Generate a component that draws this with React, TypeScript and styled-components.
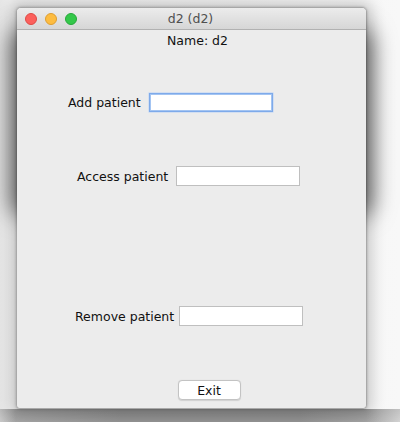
import React from "react";
import styled, { createGlobalStyle } from "styled-components";

const Global = createGlobalStyle`
  html, body { margin: 0; padding: 0; background: #f7f7f7; }
  body { width: 400px; height: 422px; overflow: hidden; }
  * { box-sizing: border-box; }
`;

const Desktop = styled.div`
  width: 400px;
  height: 422px;
  display: flex;
  flex-direction: column;
  background: linear-gradient(90deg, #e6e6e6 0px, #eeeeee 10px, #f4f4f4 60%, #f8f8f8 100%);
  font-family: "DejaVu Sans", "Liberation Sans", sans-serif;
`;

const Stage = styled.div`
  flex: 1;
  padding: 7px 0 0 16px;
  display: flex;
  align-items: flex-start;
`;

const WindowFrame = styled.div`
  position: relative;
  width: 351px;
  height: 402px;
  display: flex;
  flex-direction: column;
  border: 1px solid #a9a9a9;
  border-radius: 5px 5px 4px 4px;
  background: #ececec;
  box-shadow: 0 0 14px 6px rgba(0, 0, 0, 0.16), 0 0 3px rgba(0, 0, 0, 0.25);
  z-index: 1;
`;

const BackShadow = styled.div`
  position: absolute;
  left: 1px;
  right: 1px;
  top: 26px;
  height: 172px;
  border-radius: 6px;
  box-shadow: 0 2px 22px 8px rgba(0, 0, 0, 0.55);
  z-index: -1;
`;

const TitleBar = styled.div`
  height: 22px;
  flex: none;
  display: flex;
  align-items: center;
  position: relative;
  padding-left: 8px;
  gap: 8px;
  background: linear-gradient(#ececec, #d6d6d6);
  border-bottom: 1px solid #b1b1b1;
  border-radius: 4px 4px 0 0;
`;

const Light = styled.span<{ $fill: string; $edge: string }>`
  width: 12px;
  height: 12px;
  border-radius: 50%;
  background: ${(p) => p.$fill};
  border: 0.5px solid ${(p) => p.$edge};
`;

const Title = styled.div`
  position: absolute;
  left: 0;
  right: 0;
  top: 0;
  bottom: 0;
  display: flex;
  align-items: center;
  justify-content: center;
  font-size: 12.5px;
  color: #4f4f4f;
  padding-right: 2px;
`;

const Content = styled.div`
  flex: 1;
  display: flex;
  flex-direction: column;
  background: #ececec;
  border-radius: 0 0 4px 4px;
`;

const NameLine = styled.div`
  height: 20px;
  display: flex;
  align-items: center;
  justify-content: center;
  padding-left: 12px;
  font-size: 12.5px;
  color: #111;
`;

const Row = styled.div<{ $top: number; $left: number; $gap: number }>`
  margin-top: ${(p) => p.$top}px;
  padding-left: ${(p) => p.$left}px;
  display: flex;
  align-items: center;
  gap: ${(p) => p.$gap}px;
  height: 20px;
`;

const Label = styled.span`
  font-size: 12.5px;
  color: #111;
  white-space: nowrap;
`;

const Field = styled.div<{ $focused?: boolean }>`
  width: 124px;
  height: 20px;
  background: #fff;
  border: 1px solid ${(p) => (p.$focused ? "#7eaaea" : "#bfbfbf")};
  box-shadow: ${(p) =>
    p.$focused ? "inset 0 0 0 1px #a3c4f2, 0 0 0 0.5px #b9d2f5" : "none"};
  ${(p) => (p.$focused ? "width: 124px; height: 19px;" : "")}
`;

const ButtonRow = styled.div`
  margin-top: 54px;
  display: flex;
  justify-content: center;
  padding-left: 35px;
`;

const Button = styled.button`
  width: 63px;
  height: 20px;
  background: #fff;
  border: 1px solid #c3c3c3;
  border-radius: 4px;
  box-shadow: 0 0.5px 1px rgba(0, 0, 0, 0.12);
  font-family: "DejaVu Sans", "Liberation Sans", sans-serif;
  font-size: 12.5px;
  color: #111;
  padding: 0;
  display: flex;
  align-items: center;
  justify-content: center;
`;

const BottomStrip = styled.div`
  height: 13px;
  flex: none;
  background:
    linear-gradient(rgba(0, 0, 0, 0.08), rgba(0, 0, 0, 0)),
    linear-gradient(90deg, #c9c9c9 0px, #a5a5a5 16px, #939393 30%, #939393 75%, #a3a3a3 366px, #d3d3d3 100%);
`;

export default function App() {
  return (
    <>
      <Global />
      <Desktop>
        <Stage>
          <WindowFrame>
            <BackShadow />
            <TitleBar>
              <Light $fill="#fc605c" $edge="#de4a45" />
              <Light $fill="#fdbc40" $edge="#de9e30" />
              <Light $fill="#34c84a" $edge="#27a83a" />
              <Title>d2 (d2)</Title>
            </TitleBar>
            <Content>
              <NameLine>Name: d2</NameLine>
              <Row $top={42} $left={51} $gap={8}>
                <Label>Add patient</Label>
                <Field $focused />
              </Row>
              <Row $top={54} $left={60} $gap={8}>
                <Label>Access patient</Label>
                <Field />
              </Row>
              <Row $top={120} $left={58} $gap={5}>
                <Label>Remove patient</Label>
                <Field />
              </Row>
              <ButtonRow>
                <Button>Exit</Button>
              </ButtonRow>
            </Content>
          </WindowFrame>
        </Stage>
        <BottomStrip />
      </Desktop>
    </>
  );
}
